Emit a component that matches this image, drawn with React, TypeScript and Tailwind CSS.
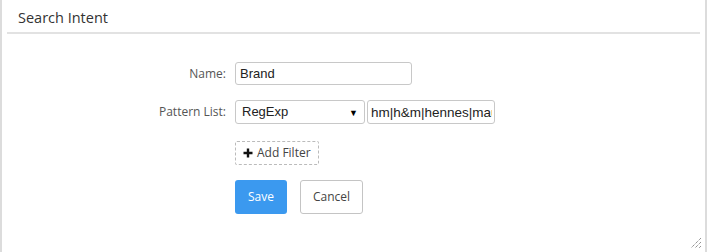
import React from 'react';

const App: React.FC = () => {
  return (
    <div className="w-[707px] h-[252px] bg-white overflow-hidden" style={{ fontFamily: '"Open Sans", sans-serif' }}>
      <div className="relative h-full border-l-2 border-r-2 border-[#dcdcdc] px-[5px]">
        <div className="h-[34px] border-b-2 border-[#e2e2e2] pl-[11px] pt-[7px] text-[14.5px] text-[#333]">
          Search Intent
        </div>

        <div className="pt-[28px]">
          <div className="flex items-center h-[23px]">
            <label className="w-[228px] text-right pr-[9px] text-[12px] text-[#555]">Name:</label>
            <input
              defaultValue="Brand"
              className="w-[177px] h-[23px] border border-[#c8c8c8] rounded-[3px] px-[4px] text-[13px] text-[#222] outline-none"
              style={{ fontFamily: '"Liberation Sans", Arial, sans-serif' }}
            />
          </div>

          <div className="flex items-center mt-[15px] h-[24px]">
            <label className="w-[228px] text-right pr-[9px] text-[12px] text-[#555]">Pattern List:</label>
            <div
              className="relative w-[130px] h-[24px] border border-[#c8c8c8] rounded-[3px] pl-[6px] flex items-center text-[13px] text-[#222]"
              style={{ fontFamily: '"Liberation Sans", Arial, sans-serif' }}
            >
              RegExp
              <span className="absolute right-[6px] top-[6px] text-[9px] text-black">▼</span>
            </div>
            <input
              defaultValue="hm|h&m|hennes|mauritz"
              className="ml-[2px] w-[128px] h-[24px] border border-[#c8c8c8] rounded-[3px] pl-[3px] pr-[2px] text-[13.5px] text-[#222] outline-none"
              style={{ fontFamily: '"Liberation Sans", Arial, sans-serif' }}
            />
          </div>

          <div className="pl-[228px] mt-[17px]">
            <button className="h-[24px] px-[7px] border border-dashed border-[#bbb] rounded-[2px] flex items-center gap-[4px] text-[12px] text-[#444]">
              <svg width="10" height="10" viewBox="0 0 10 10">
                <path d="M5 0.5v9M0.5 5h9" stroke="#111" strokeWidth="2.4" />
              </svg>
              Add Filter
            </button>
          </div>

          <div className="pl-[228px] mt-[15px] flex gap-[13px]">
            <button className="w-[52px] h-[34px] bg-[#3b99ef] rounded-[3px] text-white text-[12px]">Save</button>
            <button className="w-[63px] h-[34px] border border-[#c4c4c4] rounded-[3px] text-[#444] text-[12px] bg-white">Cancel</button>
          </div>
        </div>

        <svg className="absolute right-[3px] bottom-[3px]" width="12" height="12" viewBox="0 0 12 12">
          <path d="M11 1L1 11M11 5L5 11M11 9L9 11" stroke="#666" strokeWidth="1" strokeDasharray="1 1" />
        </svg>
      </div>
    </div>
  );
};

export default App;
